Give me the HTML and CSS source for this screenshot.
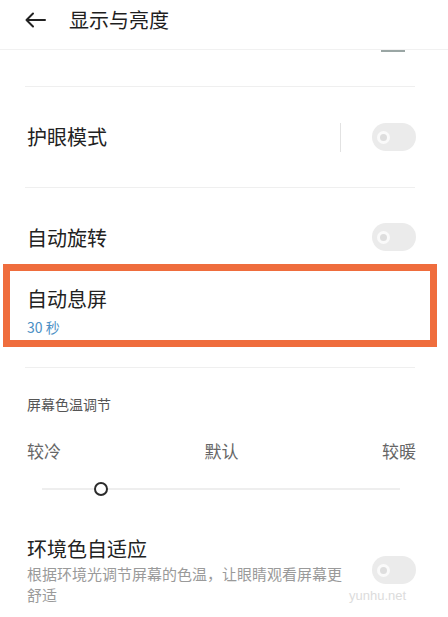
FILE: index.html
```html
<!DOCTYPE html>
<html lang="zh">
<head>
<meta charset="utf-8">
<title>显示与亮度</title>
<link rel="stylesheet" href="styles.css">
</head>
<body>
<div class="page">
  <header class="header">
    <svg class="back" width="22" height="16" viewBox="0 0 22 16"><path d="M21 8H2.5M9 1.5L2.5 8L9 14.5" fill="none" stroke="#222" stroke-width="2" stroke-linecap="round" stroke-linejoin="round"/></svg>
    <h1 class="title">显示与亮度</h1>
  </header>
  <div class="partial"><span class="partial-mark"></span></div>
  <div class="divider"></div>
  <div class="row row-eye">
    <span class="label">护眼模式</span>
    <div class="controls">
      <span class="vsep"></span>
      <span class="toggle"><span class="knob"></span></span>
    </div>
  </div>
  <div class="divider"></div>
  <div class="row row-rotate">
    <span class="label">自动旋转</span>
    <span class="toggle"><span class="knob"></span></span>
  </div>
  <div class="highlight">
    <div class="label">自动息屏</div>
    <div class="value">30 秒</div>
  </div>
  <div class="divider divider-lower"></div>
  <div class="section-title">屏幕色温调节</div>
  <div class="temp-labels">
    <span>较冷</span>
    <span>默认</span>
    <span>较暖</span>
  </div>
  <div class="slider"><span class="thumb"></span></div>
  <div class="row row-ambient">
    <div class="text-col">
      <div class="label">环境色自适应</div>
      <div class="desc">根据环境光调节屏幕的色温，让眼睛观看屏幕更舒适</div>
    </div>
    <span class="toggle"><span class="knob"></span></span>
    <span class="watermark">yunhu.net</span>
  </div>
</div>
</body>
</html>
```

FILE: styles.css
```css
* { box-sizing: border-box; margin: 0; padding: 0; }
html, body { background: #fff; }
body {
  font-family: "Noto Sans CJK SC", "Noto Sans", sans-serif;
  color: #222;
  width: 448px;
  height: 617px;
  overflow: hidden;
}
.page { display: flex; flex-direction: column; position: relative; }

.header {
  height: 50px;
  display: flex;
  align-items: flex-start;
  padding: 6px 0 0 24px;
  border-bottom: 1px solid #f1f1f1;
}
.back { margin-top: 6px; }
.title {
  font-size: 20px;
  font-weight: 400;
  line-height: 28px;
  margin-left: 23px;
  color: #1e1e1e;
}

.partial {
  height: 36px;
  display: flex;
  justify-content: flex-end;
  padding-right: 43px;
}
.partial-mark {
  width: 24px;
  height: 2px;
  background: #9aa6a4;
}

.divider {
  height: 1px;
  background: #efefef;
  margin: 0 33px 0 25px;
}

.row {
  display: flex;
  align-items: center;
  justify-content: space-between;
  padding: 0 32px 0 27px;
}
.row-eye { height: 100px; }
.row-rotate { height: 76px; align-items: flex-start; padding-top: 36px; }
.row-rotate .toggle { margin-top: -1px; }

.label {
  font-size: 20px;
  line-height: 28px;
  color: #222;
}

.controls { display: flex; align-items: center; }
.vsep {
  width: 1px;
  height: 29px;
  background: #e2e2e2;
  margin-right: 31px;
}

.toggle {
  width: 44px;
  height: 28px;
  border-radius: 14px;
  background: #ebebeb;
  display: flex;
  align-items: center;
  padding-left: 5px;
}
.knob {
  width: 13px;
  height: 13px;
  border-radius: 50%;
  background: #dedede;
  border: 3px solid #fafafa;
}

.highlight {
  height: 83px;
  margin: 0 11px 0 3px;
  border: 7px solid #ef6d3d;
  padding: 14px 0 0 17px;
}
.value {
  font-size: 14px;
  line-height: 20px;
  margin-top: 4px;
  color: #4a8fc4;
}

.divider-lower { margin-top: 20px; }

.section-title {
  font-size: 14px;
  line-height: 20px;
  color: #555;
  padding-left: 27px;
  margin-top: 26px;
}

.temp-labels {
  display: flex;
  justify-content: space-between;
  padding: 0 32px 0 27px;
  margin-top: 25px;
  font-size: 17px;
  line-height: 24px;
  color: #666;
}

.slider {
  position: relative;
  height: 2px;
  background: #eeeeee;
  margin: 25px 48px 0 42px;
}
.thumb {
  position: absolute;
  left: 52px;
  top: -6px;
  width: 14px;
  height: 14px;
  border-radius: 50%;
  background: #fff;
  border: 2.5px solid #2b2b2b;
}

.row-ambient {
  position: relative;
  margin-top: 45px;
  align-items: center;
}
.text-col { width: 320px; }
.desc {
  font-size: 15px;
  line-height: 21px;
  color: #9a9a9a;
}
.watermark {
  position: absolute;
  left: 349px;
  top: 53px;
  font-family: "Liberation Sans", sans-serif;
  font-size: 13px;
  color: #dcdcdc;
}
```
